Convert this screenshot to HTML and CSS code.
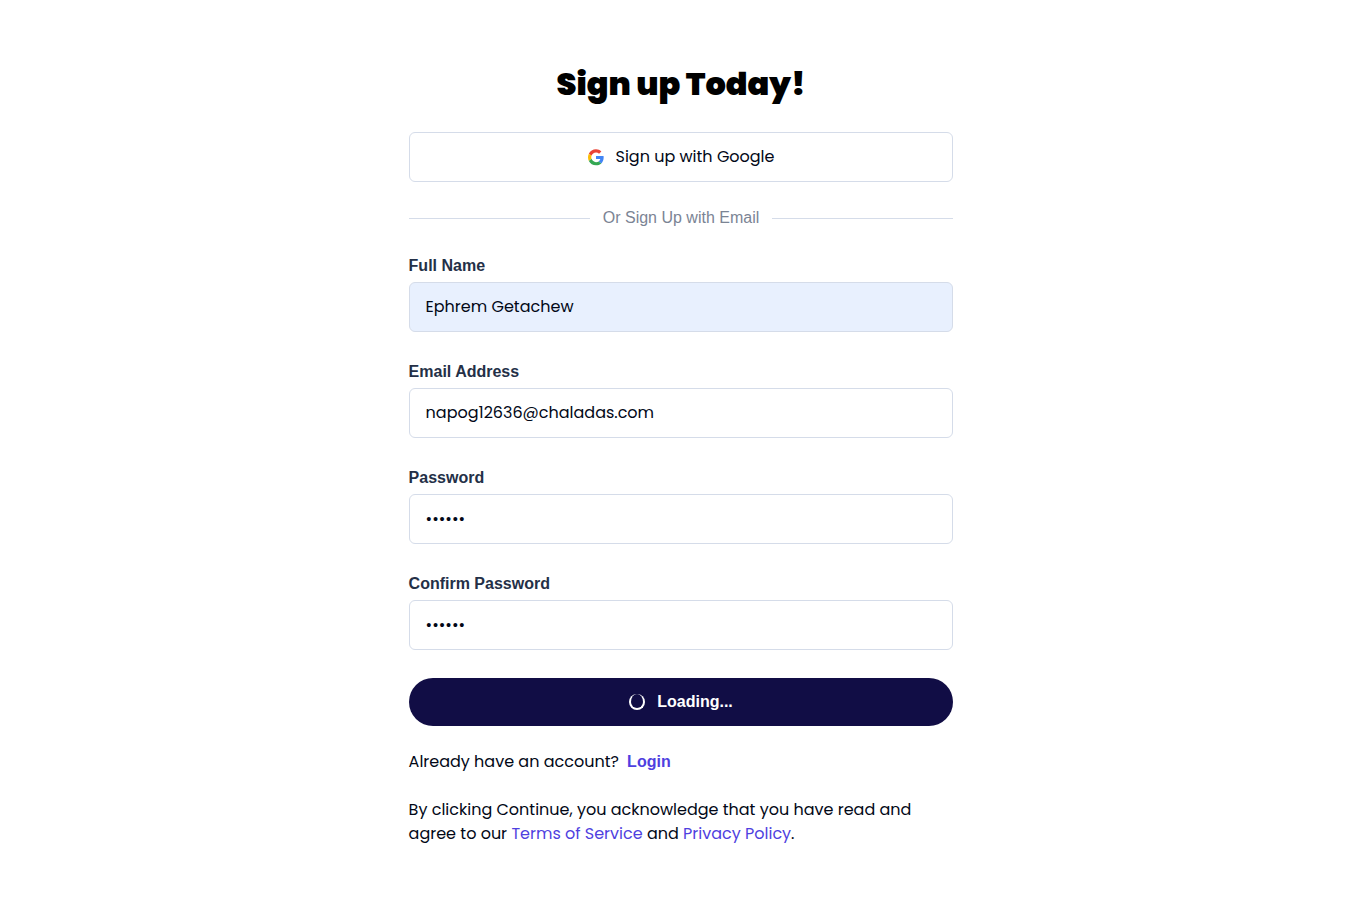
FILE: index.html
```html
<!DOCTYPE html>
<html lang="en">
<head>
<meta charset="utf-8">
<meta name="viewport" content="width=device-width, initial-scale=1">
<title>Sign up</title>
<link rel="stylesheet" href="styles.css">
</head>
<body>
<main class="page">
  <section class="signup">
    <h1 class="title">Sign up Today!</h1>
    <button type="button" class="google">
      <svg class="icon" viewBox="0 -1 48 48" aria-hidden="true">
        <path fill="#ea4335" d="M24 9.5c3.54 0 6.71 1.22 9.21 3.6l6.85-6.85C35.9 2.38 30.47 0 24 0 14.62 0 6.51 5.38 2.56 13.22l7.98 6.19C12.43 13.72 17.74 9.5 24 9.5z"/>
        <path fill="#4285f4" d="M46.98 24.55c0-1.57-.15-3.09-.38-4.55H24v9.02h12.94c-.58 2.96-2.26 5.48-4.78 7.18l7.73 6c4.51-4.18 7.09-10.36 7.09-17.65z"/>
        <path fill="#fbbc05" d="M10.53 28.59c-.48-1.45-.76-2.99-.76-4.59s.27-3.14.76-4.59l-7.98-6.19C.92 16.46 0 20.12 0 24c0 3.88.92 7.54 2.56 10.78l7.97-6.19z"/>
        <path fill="#34a853" d="M24 48c6.48 0 11.93-2.13 15.89-5.81l-7.73-6c-2.15 1.45-4.92 2.3-8.16 2.3-6.26 0-11.57-4.22-13.47-9.91l-7.98 6.19C6.51 42.62 14.62 48 24 48z"/>
      </svg>
      <span>Sign up with Google</span>
    </button>
    <div class="divider">Or Sign Up with Email</div>
    <form class="form">
      <div class="field">
        <label for="name">Full Name</label>
        <input class="filled" id="name" type="text" value="Ephrem Getachew">
      </div>
      <div class="field">
        <label for="email">Email Address</label>
        <input id="email" type="email" value="napog12636@chaladas.com">
      </div>
      <div class="field">
        <label for="password">Password</label>
        <input id="password" type="password" value="secret">
      </div>
      <div class="field">
        <label for="confirm">Confirm Password</label>
        <input id="confirm" type="password" value="secret">
      </div>
      <button type="submit" class="submit">
        <span class="spinner"></span>
        <span>Loading...</span>
      </button>
    </form>
    <p class="login">Already have an account? <a href="#login">Login</a></p>
    <p class="terms">By clicking Continue, you acknowledge that you have read and agree to our <a href="#terms">Terms of Service</a> and <a href="#privacy">Privacy Policy</a>.</p>
  </section>
</main>
</body>
</html>
```
FILE: styles.css
```css
* {
  box-sizing: border-box;
}

body {
  margin: 0;
  background: #fff;
  color: #020817;
  font: 16px/24px Poppins, Inter, sans-serif;
}

.page {
  display: flex;
  align-items: center;
  justify-content: center;
  min-height: 100vh;
}

.signup {
  display: flex;
  flex-direction: column;
  gap: 24px;
  width: 40%;
}

.title {
  margin: 0;
  color: #000;
  font-size: 32px;
  font-weight: 900;
  line-height: 48px;
  text-align: center;
}

button {
  display: flex;
  align-items: center;
  justify-content: center;
  width: 100%;
  font: inherit;
  cursor: pointer;
}

.google {
  gap: 12px;
  height: 50px;
  border: 1px solid #d5dce9;
  border-radius: 6px;
  background: #fff;
  color: #020817;
}

.icon {
  width: 16px;
  height: 16px;
  overflow: visible;
}

.spinner {
  width: 16px;
  height: 16px;
  border: 2px solid #fff;
  border-top-width: 0;
  border-radius: 50%;
}

.divider {
  display: flex;
  align-items: center;
  gap: 13px;
  color: #7b8494;
  font-family: "Liberation Sans", sans-serif;
}

.divider::before,
.divider::after {
  content: "";
  flex: 1;
  height: 1px;
  background: #d5dce9;
}

.form {
  display: flex;
  flex-direction: column;
  gap: 28px;
}

.field {
  display: flex;
  flex-direction: column;
  gap: 4px;
}

.field label {
  color: #243047;
  font-family: "Liberation Sans", sans-serif;
  font-weight: 700;
}

.field input {
  width: 100%;
  height: 50px;
  padding: 11px 16px 13px;
  border: 1px solid #d5dce9;
  border-radius: 6px;
  background: #fff;
  color: #020817;
  font: inherit;
}

.field .filled {
  background: #e8f0fe;
}

.submit {
  gap: 12px;
  height: 48px;
  border: 0;
  border-radius: 24px;
  background: #110d45;
  color: #fff;
  font-family: "Liberation Sans", sans-serif;
  font-weight: 700;
}

p {
  margin: 0;
}

a {
  color: #4f3fe0;
  text-decoration: none;
}

.login a {
  margin-left: 4px;
  font-family: "Liberation Sans", sans-serif;
  font-weight: 700;
}
```
